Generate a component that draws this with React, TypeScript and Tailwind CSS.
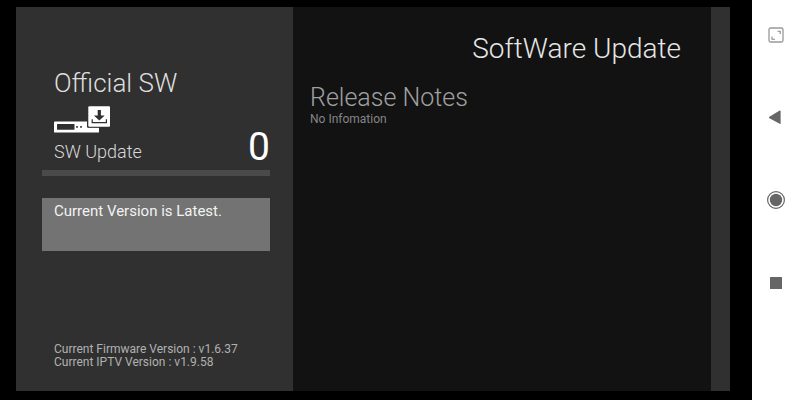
import { type ReactNode } from 'react'

/* --------------------------------
   Icons
   -------------------------------- */

function SetTopBoxIcon() {
  return (
    <svg width="57" height="27" viewBox="0 0 57 27" aria-hidden="true">
      <path d="M1 15.5H34V21.5H45V26Q45 26.5 44 26.5H1Q0 26.5 0 26V16.5Q0 15.5 1 15.5Z" fill="#fff" />
      <rect x="3" y="18" width="17.5" height="5.7" rx="0.5" fill="#303030" />
      <rect x="22" y="20" width="2" height="1.8" rx="0.5" fill="#444" />
      <rect x="26" y="20" width="2" height="1.8" rx="0.5" fill="#444" />
      <rect x="33" y="-1" width="24" height="22.8" rx="1" fill="#303030" />
      <rect x="34.3" y="0.3" width="21.7" height="20.5" rx="1" fill="#fff" />
      <path d="M43.7 4H46.9V9.5H50.7L45.3 14.6L39.9 9.5H43.7Z" fill="#303030" />
      <path d="M38.2 13.3V16.7H52.4V13.3" fill="none" stroke="#303030" strokeWidth="1.2" />
    </svg>
  )
}

function ExpandIcon() {
  return (
    <svg width="20" height="20" viewBox="0 0 20 20" fill="none" aria-hidden="true">
      <rect x="3" y="3" width="14" height="14" rx="1.5" stroke="#999" strokeWidth="1.3" />
      <path d="M11.5 6.3H14.2V9M6 11.5V14.2H9" stroke="#8a8a8a" strokeWidth="1.1" />
    </svg>
  )
}

function BackIcon() {
  return (
    <svg width="20" height="20" viewBox="0 0 20 20" fill="#666" aria-hidden="true">
      <path d="M3 10L13.7 3.6Q14.6 3.2 14.6 4.1V16.4Q14.6 17.2 13.7 16.8L3 10.9Z" />
    </svg>
  )
}

function HomeIcon() {
  return (
    <svg width="20" height="20" viewBox="0 0 20 20" aria-hidden="true">
      <circle cx="10" cy="10" r="8.4" fill="none" stroke="#666" strokeWidth="1.2" />
      <circle cx="10" cy="10" r="6.2" fill="#666" />
    </svg>
  )
}

function RecentsIcon() {
  return (
    <svg width="20" height="20" viewBox="0 0 20 20" fill="#666" aria-hidden="true">
      <rect x="4" y="4" width="12" height="12" rx="0.5" />
    </svg>
  )
}

/* --------------------------------
   Navigation rail
   -------------------------------- */

function NavButton({ label, children }: { label: string; children: ReactNode }) {
  return (
    <button type="button" aria-label={label} className="flex size-5 items-center justify-center">
      {children}
    </button>
  )
}

function NavRail() {
  return (
    <nav aria-label="System" className="flex w-12 shrink-0 flex-col items-center bg-white pt-[25px]">
      <NavButton label="Full screen">
        <ExpandIcon />
      </NavButton>
      <div className="mt-[62px] flex flex-col gap-[63px]">
        <NavButton label="Back">
          <BackIcon />
        </NavButton>
        <NavButton label="Home">
          <HomeIcon />
        </NavButton>
        <NavButton label="Recent apps">
          <RecentsIcon />
        </NavButton>
      </div>
    </nav>
  )
}

/* --------------------------------
   Sidebar
   -------------------------------- */

const versions = [
  { name: 'Current Firmware Version', value: 'v1.6.37' },
  { name: 'Current IPTV Version', value: 'v1.9.58' },
]

function Sidebar() {
  return (
    <aside className="flex w-[277px] shrink-0 flex-col bg-[#303030] pt-[60px] pr-[23px] pb-[22px] pl-[26px]">
      <h2 className="pl-3 text-[26px] leading-8 font-light text-[#dedede]">Official SW</h2>
      <div className="mt-[7px] flex items-end justify-between pl-3">
        <div className="flex flex-col gap-[7px] pb-0.5">
          <SetTopBoxIcon />
          <span className="text-[18px] leading-6 font-light text-[#d8d8d8]">SW Update</span>
        </div>
        <span className="text-[39px] leading-[38px] text-white">0</span>
      </div>
      <div
        role="progressbar"
        aria-label="SW Update"
        aria-valuenow={0}
        aria-valuemin={0}
        aria-valuemax={100}
        className="mt-1 h-1.5 bg-[#4a4a4a]"
      />
      <p
        role="status"
        className="mt-[22px] min-h-[53px] bg-[#737373] px-3 pt-[3px] text-[15px] leading-5 text-[#f2f2f2]"
      >
        Current Version is Latest.
      </p>
      <ul className="mt-auto pl-3 text-[12px] leading-[13px] text-[#b0b0b0]">
        {versions.map((v) => (
          <li key={v.name}>
            {v.name} : {v.value}
          </li>
        ))}
      </ul>
    </aside>
  )
}

export default function App() {
  return (
    <div className="flex min-h-screen bg-black font-['Roboto',sans-serif]">
      <div className="flex flex-1 pt-[7px] pr-[22px] pb-[9px] pl-4">
        <Sidebar />
        <main className="flex-1 bg-[#121212] px-[17px] pt-6">
          <h1 className="pr-[13px] text-right text-[28px] leading-9 font-light text-[#e6e6e6]">
            SoftWare Update
          </h1>
          <section className="mt-4">
            <h2 className="text-[25px] leading-[30px] font-light text-[#a0a0a0]">Release Notes</h2>
            <p className="text-[12px] leading-[13px] text-[#858585]">No Infomation</p>
          </section>
        </main>
        <div className="w-[19px] shrink-0 bg-[#303030]" />
      </div>
      <NavRail />
    </div>
  )
}
